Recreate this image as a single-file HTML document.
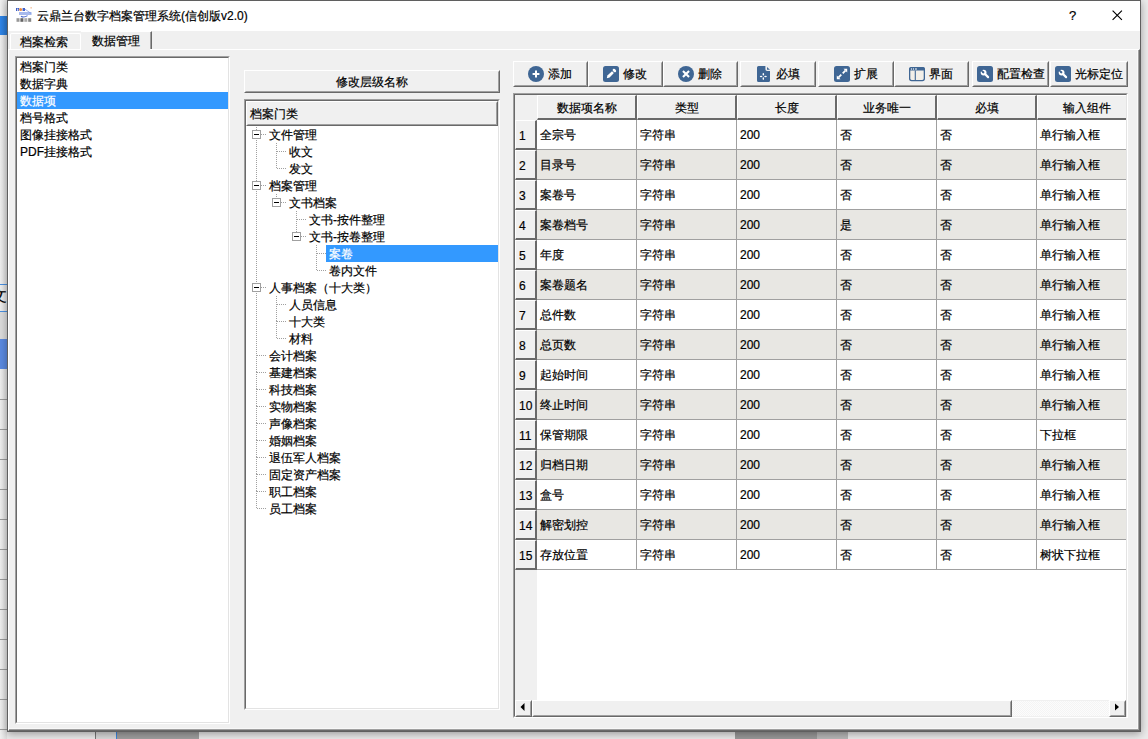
<!DOCTYPE html><html><head><meta charset="utf-8"><style>
*{box-sizing:border-box;margin:0;padding:0}
html,body{width:1148px;height:739px;overflow:hidden;background:#ebebeb;font-family:"Liberation Sans",sans-serif;font-size:12px;color:#000}
.abs{position:absolute}
.t{position:absolute;white-space:nowrap;line-height:17px;font-size:12px;-webkit-text-stroke:0.2px currentColor}
</style></head><body>

<div class="abs" style="left:0;top:0;width:7px;height:739px;background:linear-gradient(to right,#f0f0f0,#dcdcdc)"></div>
<div class="abs" style="left:0;top:16px;width:7px;height:19px;background:linear-gradient(to right,#2f86ea,#2a78d0)"></div>
<div class="abs" style="left:0;top:284px;width:7px;height:1px;background:#4a90e0"></div>
<div class="abs" style="left:0;top:311px;width:7px;height:1px;background:#4a90e0"></div>
<div class="abs" style="left:0;top:286px;width:7px;height:22px;overflow:hidden"><div class="t" style="left:-9px;top:1px;font-size:16px;line-height:18px">文</div></div>
<div class="abs" style="left:0;top:312px;width:7px;height:27px;background:#dcdcdc"></div>
<div class="abs" style="left:0;top:339px;width:7px;height:30px;background:#5b8ae0"></div>
<div class="abs" style="left:0;top:399px;width:7px;height:1px;background:#9a9a9a"></div>
<div class="abs" style="left:0;top:429px;width:7px;height:1px;background:#9a9a9a"></div>
<div class="abs" style="left:0;top:459px;width:7px;height:1px;background:#9a9a9a"></div>
<div class="abs" style="left:0;top:489px;width:7px;height:1px;background:#9a9a9a"></div>
<div class="abs" style="left:0;top:519px;width:7px;height:1px;background:#9a9a9a"></div>
<div class="abs" style="left:0;top:549px;width:7px;height:1px;background:#9a9a9a"></div>
<div class="abs" style="left:0;top:579px;width:7px;height:1px;background:#9a9a9a"></div>
<div class="abs" style="left:0;top:609px;width:7px;height:1px;background:#9a9a9a"></div>
<div class="abs" style="left:0;top:639px;width:7px;height:1px;background:#9a9a9a"></div>
<div class="abs" style="left:0;top:669px;width:7px;height:1px;background:#9a9a9a"></div>
<div class="abs" style="left:0;top:699px;width:7px;height:1px;background:#9a9a9a"></div>
<div class="abs" style="left:0;top:729px;width:7px;height:1px;background:#9a9a9a"></div>
<div class="abs" style="left:95px;top:731px;width:1px;height:8px;background:#777"></div>
<div class="abs" style="left:96px;top:731px;width:20px;height:8px;background:#dadada"></div>
<div class="abs" style="left:116px;top:731px;width:1px;height:8px;background:#3a86e0"></div>
<div class="abs" style="left:117px;top:731px;width:82px;height:8px;background:#a0a0a0"></div>
<div class="abs" style="left:735px;top:731px;width:82px;height:8px;background:#9a9a9a"></div>
<div class="abs" style="left:817px;top:731px;width:31px;height:8px;background:#b8b8b8"></div>
<div class="abs" style="left:7px;top:0;width:1134px;height:732px;background:#f0f0f0;border:1px solid #5f5f5f;box-shadow:0 2px 8px rgba(0,0,0,0.35)"></div>
<div class="abs" style="left:8px;top:1px;width:1132px;height:30px;background:#fff"></div>
<svg class="abs" style="left:16px;top:7px" width="16" height="16" viewBox="0 0 16 16">
<rect x="0" y="1" width="1.2" height="3" fill="#3c5cc4"/><rect x="1.4" y="1" width="1.8" height="0.9" fill="#3c5cc4"/><rect x="1.9" y="1" width="0.9" height="3" fill="#3c5cc4"/>
<circle cx="4.6" cy="2.5" r="1.5" fill="#f08a3c"/><rect x="6.6" y="1" width="2.4" height="3" fill="#4060c8"/>
<path d="M9 2.2 L15.2 6.5" stroke="#9fb2e8" stroke-width="1"/><rect x="14.6" y="0" width="1" height="1.6" fill="#f0b080"/>
<rect x="3" y="5" width="12.5" height="3" fill="#6d8ae0" opacity="0.6"/>
<path d="M5 9.2 Q8 11 11.5 8.6" stroke="#4a68cc" stroke-width="1.1" fill="none"/>
<rect x="0.5" y="11.2" width="3" height="3.6" fill="#444" opacity="0.55"/><rect x="4.4" y="11.2" width="3" height="3.6" fill="#222" opacity="0.7"/><rect x="8.3" y="11.2" width="3" height="3.6" fill="#555" opacity="0.5"/><rect x="12.2" y="11.2" width="3" height="3.6" fill="#333" opacity="0.6"/></svg>
<div class="t" style="left:37px;top:8px">云鼎兰台数字档案管理系统(信创版v2.0)</div>
<div class="t" style="left:1069px;top:7px;font-size:13px">?</div>
<svg class="abs" style="left:1112px;top:10px" width="11" height="11" viewBox="0 0 11 11"><path d="M0.6 0.6 L9.9 9.9 M9.9 0.6 L0.6 9.9" stroke="#000" stroke-width="1.15"/></svg>
<div class="abs" style="left:10px;top:33px;width:71px;height:17px;border-top:1px solid #fff;border-left:1px solid #fff;border-right:1px solid #fff;border-radius:2px 2px 0 0"></div>
<div class="t" style="left:20px;top:34px">档案检索</div>
<div class="abs" style="left:81px;top:31px;width:71px;height:19px;border-top:1px solid #fff;border-right:1px solid #696969"></div>
<div class="abs" style="left:150px;top:32px;width:1px;height:17px;background:#a0a0a0"></div>
<div class="t" style="left:92px;top:33px">数据管理</div>
<div class="abs" style="left:8px;top:49px;width:1132px;height:682px;border-top:1px solid #fff;border-left:1px solid #fff;border-right:1px solid #696969;border-bottom:1px solid #696969"></div>
<div class="abs" style="left:9px;top:50px;width:1130px;height:680px;border-right:1px solid #a0a0a0;border-bottom:1px solid #a0a0a0"></div>
<div class="abs" style="left:9px;top:50px;width:1129px;height:679px;border-right:1px solid #f8f8f8;border-bottom:1px solid #f8f8f8"></div>
<div class="abs" style="left:81px;top:49px;width:69px;height:1px;background:#f0f0f0"></div>
<div class="abs" style="left:15px;top:56px;width:215px;height:668px;border-top:1px solid #a0a0a0;border-left:1px solid #a0a0a0;border-right:1px solid #fff;border-bottom:1px solid #fff"></div>
<div class="abs" style="left:16px;top:57px;width:213px;height:666px;background:#fff;border-top:1px solid #696969;border-left:1px solid #696969;border-right:1px solid #e3e3e3;border-bottom:1px solid #e3e3e3"></div>
<div class="t" style="left:20px;top:59px">档案门类</div>
<div class="t" style="left:20px;top:76px">数据字典</div>
<div class="abs" style="left:17px;top:92px;width:211px;height:17px;background:#3399ff"></div>
<div class="t" style="left:20px;top:93px;color:#fff">数据项</div>
<div class="t" style="left:20px;top:110px">档号格式</div>
<div class="t" style="left:20px;top:127px">图像挂接格式</div>
<div class="t" style="left:20px;top:144px">PDF挂接格式</div>
<div class="abs" style="left:244px;top:70px;width:256px;height:23px;background:#f0f0f0;border-top:1px solid #fff;border-left:1px solid #fff;border-right:1px solid #696969;border-bottom:1px solid #696969"></div>
<div class="abs" style="left:245px;top:71px;width:254px;height:21px;border-top:1px solid #f0f0f0;border-left:1px solid #f0f0f0;border-right:1px solid #a0a0a0;border-bottom:1px solid #a0a0a0"></div>
<div class="t" style="left:244px;top:74px;width:256px;text-align:center">修改层级名称</div>
<div class="abs" style="left:244px;top:99px;width:256px;height:611px;border-top:1px solid #a0a0a0;border-left:1px solid #a0a0a0;border-right:1px solid #fff;border-bottom:1px solid #fff"></div>
<div class="abs" style="left:245px;top:100px;width:254px;height:609px;background:#fff;border-top:1px solid #696969;border-left:1px solid #696969;border-right:1px solid #e3e3e3;border-bottom:1px solid #e3e3e3"></div>
<div class="abs" style="left:246px;top:101px;width:252px;height:25px;background:#f0f0f0;border-top:1px solid #fff;border-left:1px solid #fff;border-right:1px solid #696969;border-bottom:1px solid #696969"></div>
<div class="abs" style="left:247px;top:102px;width:250px;height:23px;border-top:1px solid #f0f0f0;border-left:1px solid #f0f0f0;border-right:1px solid #a0a0a0;border-bottom:1px solid #a0a0a0"></div>
<div class="t" style="left:250px;top:106px">档案门类</div>
<svg class="abs" style="left:0;top:0" width="1148" height="739">
<line x1="257" y1="134.5" x2="266" y2="134.5" stroke="#a0a0a0" stroke-width="1" stroke-dasharray="1 1"/>
<line x1="256.5" y1="134" x2="256.5" y2="185" stroke="#a0a0a0" stroke-width="1" stroke-dasharray="1 1"/>
<line x1="256.5" y1="127" x2="256.5" y2="134" stroke="#a0a0a0" stroke-width="1" stroke-dasharray="1 1"/>
<rect x="252.5" y="130.5" width="8" height="8" fill="#fff" stroke="#a0a0a0" stroke-width="1"/>
<line x1="254" y1="134.5" x2="259" y2="134.5" stroke="#000" stroke-width="1"/>
<line x1="277" y1="151.5" x2="286" y2="151.5" stroke="#a0a0a0" stroke-width="1" stroke-dasharray="1 1"/>
<line x1="276.5" y1="151" x2="276.5" y2="168" stroke="#a0a0a0" stroke-width="1" stroke-dasharray="1 1"/>
<line x1="276.5" y1="143" x2="276.5" y2="151" stroke="#a0a0a0" stroke-width="1" stroke-dasharray="1 1"/>
<line x1="277" y1="168.5" x2="286" y2="168.5" stroke="#a0a0a0" stroke-width="1" stroke-dasharray="1 1"/>
<line x1="257" y1="185.5" x2="266" y2="185.5" stroke="#a0a0a0" stroke-width="1" stroke-dasharray="1 1"/>
<line x1="256.5" y1="185" x2="256.5" y2="287" stroke="#a0a0a0" stroke-width="1" stroke-dasharray="1 1"/>
<rect x="252.5" y="181.5" width="8" height="8" fill="#fff" stroke="#a0a0a0" stroke-width="1"/>
<line x1="254" y1="185.5" x2="259" y2="185.5" stroke="#000" stroke-width="1"/>
<line x1="277" y1="202.5" x2="286" y2="202.5" stroke="#a0a0a0" stroke-width="1" stroke-dasharray="1 1"/>
<line x1="276.5" y1="194" x2="276.5" y2="202" stroke="#a0a0a0" stroke-width="1" stroke-dasharray="1 1"/>
<rect x="272.5" y="198.5" width="8" height="8" fill="#fff" stroke="#a0a0a0" stroke-width="1"/>
<line x1="274" y1="202.5" x2="279" y2="202.5" stroke="#000" stroke-width="1"/>
<line x1="297" y1="219.5" x2="306" y2="219.5" stroke="#a0a0a0" stroke-width="1" stroke-dasharray="1 1"/>
<line x1="296.5" y1="219" x2="296.5" y2="236" stroke="#a0a0a0" stroke-width="1" stroke-dasharray="1 1"/>
<line x1="296.5" y1="211" x2="296.5" y2="219" stroke="#a0a0a0" stroke-width="1" stroke-dasharray="1 1"/>
<line x1="297" y1="236.5" x2="306" y2="236.5" stroke="#a0a0a0" stroke-width="1" stroke-dasharray="1 1"/>
<rect x="292.5" y="232.5" width="8" height="8" fill="#fff" stroke="#a0a0a0" stroke-width="1"/>
<line x1="294" y1="236.5" x2="299" y2="236.5" stroke="#000" stroke-width="1"/>
<line x1="317" y1="253.5" x2="326" y2="253.5" stroke="#a0a0a0" stroke-width="1" stroke-dasharray="1 1"/>
<line x1="316.5" y1="253" x2="316.5" y2="270" stroke="#a0a0a0" stroke-width="1" stroke-dasharray="1 1"/>
<line x1="316.5" y1="245" x2="316.5" y2="253" stroke="#a0a0a0" stroke-width="1" stroke-dasharray="1 1"/>
<line x1="317" y1="270.5" x2="326" y2="270.5" stroke="#a0a0a0" stroke-width="1" stroke-dasharray="1 1"/>
<line x1="257" y1="287.5" x2="266" y2="287.5" stroke="#a0a0a0" stroke-width="1" stroke-dasharray="1 1"/>
<line x1="256.5" y1="287" x2="256.5" y2="355" stroke="#a0a0a0" stroke-width="1" stroke-dasharray="1 1"/>
<rect x="252.5" y="283.5" width="8" height="8" fill="#fff" stroke="#a0a0a0" stroke-width="1"/>
<line x1="254" y1="287.5" x2="259" y2="287.5" stroke="#000" stroke-width="1"/>
<line x1="277" y1="304.5" x2="286" y2="304.5" stroke="#a0a0a0" stroke-width="1" stroke-dasharray="1 1"/>
<line x1="276.5" y1="304" x2="276.5" y2="321" stroke="#a0a0a0" stroke-width="1" stroke-dasharray="1 1"/>
<line x1="276.5" y1="296" x2="276.5" y2="304" stroke="#a0a0a0" stroke-width="1" stroke-dasharray="1 1"/>
<line x1="277" y1="321.5" x2="286" y2="321.5" stroke="#a0a0a0" stroke-width="1" stroke-dasharray="1 1"/>
<line x1="276.5" y1="321" x2="276.5" y2="338" stroke="#a0a0a0" stroke-width="1" stroke-dasharray="1 1"/>
<line x1="277" y1="338.5" x2="286" y2="338.5" stroke="#a0a0a0" stroke-width="1" stroke-dasharray="1 1"/>
<line x1="257" y1="355.5" x2="266" y2="355.5" stroke="#a0a0a0" stroke-width="1" stroke-dasharray="1 1"/>
<line x1="256.5" y1="355" x2="256.5" y2="372" stroke="#a0a0a0" stroke-width="1" stroke-dasharray="1 1"/>
<line x1="257" y1="372.5" x2="266" y2="372.5" stroke="#a0a0a0" stroke-width="1" stroke-dasharray="1 1"/>
<line x1="256.5" y1="372" x2="256.5" y2="389" stroke="#a0a0a0" stroke-width="1" stroke-dasharray="1 1"/>
<line x1="257" y1="389.5" x2="266" y2="389.5" stroke="#a0a0a0" stroke-width="1" stroke-dasharray="1 1"/>
<line x1="256.5" y1="389" x2="256.5" y2="406" stroke="#a0a0a0" stroke-width="1" stroke-dasharray="1 1"/>
<line x1="257" y1="406.5" x2="266" y2="406.5" stroke="#a0a0a0" stroke-width="1" stroke-dasharray="1 1"/>
<line x1="256.5" y1="406" x2="256.5" y2="423" stroke="#a0a0a0" stroke-width="1" stroke-dasharray="1 1"/>
<line x1="257" y1="423.5" x2="266" y2="423.5" stroke="#a0a0a0" stroke-width="1" stroke-dasharray="1 1"/>
<line x1="256.5" y1="423" x2="256.5" y2="440" stroke="#a0a0a0" stroke-width="1" stroke-dasharray="1 1"/>
<line x1="257" y1="440.5" x2="266" y2="440.5" stroke="#a0a0a0" stroke-width="1" stroke-dasharray="1 1"/>
<line x1="256.5" y1="440" x2="256.5" y2="457" stroke="#a0a0a0" stroke-width="1" stroke-dasharray="1 1"/>
<line x1="257" y1="457.5" x2="266" y2="457.5" stroke="#a0a0a0" stroke-width="1" stroke-dasharray="1 1"/>
<line x1="256.5" y1="457" x2="256.5" y2="474" stroke="#a0a0a0" stroke-width="1" stroke-dasharray="1 1"/>
<line x1="257" y1="474.5" x2="266" y2="474.5" stroke="#a0a0a0" stroke-width="1" stroke-dasharray="1 1"/>
<line x1="256.5" y1="474" x2="256.5" y2="491" stroke="#a0a0a0" stroke-width="1" stroke-dasharray="1 1"/>
<line x1="257" y1="491.5" x2="266" y2="491.5" stroke="#a0a0a0" stroke-width="1" stroke-dasharray="1 1"/>
<line x1="256.5" y1="491" x2="256.5" y2="508" stroke="#a0a0a0" stroke-width="1" stroke-dasharray="1 1"/>
<line x1="257" y1="508.5" x2="266" y2="508.5" stroke="#a0a0a0" stroke-width="1" stroke-dasharray="1 1"/>
</svg>
<div class="t" style="left:269px;top:127px">文件管理</div>
<div class="t" style="left:289px;top:144px">收文</div>
<div class="t" style="left:289px;top:161px">发文</div>
<div class="t" style="left:269px;top:178px">档案管理</div>
<div class="t" style="left:289px;top:195px">文书档案</div>
<div class="t" style="left:309px;top:212px">文书-按件整理</div>
<div class="t" style="left:309px;top:229px">文书-按卷整理</div>
<div class="abs" style="left:326px;top:245px;width:172px;height:17px;background:#3399ff"></div>
<div class="t" style="left:329px;top:246px;color:#fff">案卷</div>
<div class="t" style="left:329px;top:263px">卷内文件</div>
<div class="t" style="left:269px;top:280px">人事档案（十大类）</div>
<div class="t" style="left:289px;top:297px">人员信息</div>
<div class="t" style="left:289px;top:314px">十大类</div>
<div class="t" style="left:289px;top:331px">材料</div>
<div class="t" style="left:269px;top:348px">会计档案</div>
<div class="t" style="left:269px;top:365px">基建档案</div>
<div class="t" style="left:269px;top:382px">科技档案</div>
<div class="t" style="left:269px;top:399px">实物档案</div>
<div class="t" style="left:269px;top:416px">声像档案</div>
<div class="t" style="left:269px;top:433px">婚姻档案</div>
<div class="t" style="left:269px;top:450px">退伍军人档案</div>
<div class="t" style="left:269px;top:467px">固定资产档案</div>
<div class="t" style="left:269px;top:484px">职工档案</div>
<div class="t" style="left:269px;top:501px">员工档案</div>
<div class="abs" style="left:513px;top:61px;width:75px;height:26px;background:#f0f0f0;border-top:1px solid #fff;border-left:1px solid #fff;border-right:1px solid #696969;border-bottom:1px solid #696969"></div>
<div class="abs" style="left:514px;top:62px;width:73px;height:24px;border-top:1px solid #f0f0f0;border-left:1px solid #f0f0f0;border-right:1px solid #a0a0a0;border-bottom:1px solid #a0a0a0"></div>
<svg class="abs" style="left:528px;top:66px" width="16" height="16" viewBox="0 0 16 16"><circle cx="8" cy="8" r="8" fill="#3f6694"/><path d="M8 4.6 V11.4 M4.6 8 H11.4" stroke="#fff" stroke-width="2"/></svg>
<div class="t" style="left:548px;top:66px">添加</div>
<div class="abs" style="left:588px;top:61px;width:75px;height:26px;background:#f0f0f0;border-top:1px solid #fff;border-left:1px solid #fff;border-right:1px solid #696969;border-bottom:1px solid #696969"></div>
<div class="abs" style="left:589px;top:62px;width:73px;height:24px;border-top:1px solid #f0f0f0;border-left:1px solid #f0f0f0;border-right:1px solid #a0a0a0;border-bottom:1px solid #a0a0a0"></div>
<svg class="abs" style="left:603px;top:66px" width="16" height="16" viewBox="0 0 16 16"><rect x="0" y="0" width="16" height="16" rx="2.5" fill="#3f6694"/><path d="M3.8 12.2 L4.4 9.5 L9.0 5.2 L10.9 7.1 L6.6 11.6 Z" fill="#fff"/><path d="M10.9 4.0 L11.9 5.0" stroke="#fff" stroke-width="2.5" stroke-linecap="round"/></svg>
<div class="t" style="left:623px;top:66px">修改</div>
<div class="abs" style="left:663px;top:61px;width:75px;height:26px;background:#f0f0f0;border-top:1px solid #fff;border-left:1px solid #fff;border-right:1px solid #696969;border-bottom:1px solid #696969"></div>
<div class="abs" style="left:664px;top:62px;width:73px;height:24px;border-top:1px solid #f0f0f0;border-left:1px solid #f0f0f0;border-right:1px solid #a0a0a0;border-bottom:1px solid #a0a0a0"></div>
<svg class="abs" style="left:678px;top:66px" width="16" height="16" viewBox="0 0 16 16"><circle cx="8" cy="8" r="8" fill="#3f6694"/><path d="M5.7 5.7 L10.3 10.3 M10.3 5.7 L5.7 10.3" stroke="#fff" stroke-width="2.1" stroke-linecap="square"/></svg>
<div class="t" style="left:698px;top:66px">删除</div>
<div class="abs" style="left:740px;top:61px;width:76px;height:26px;background:#f0f0f0;border-top:1px solid #fff;border-left:1px solid #fff;border-right:1px solid #696969;border-bottom:1px solid #696969"></div>
<div class="abs" style="left:741px;top:62px;width:74px;height:24px;border-top:1px solid #f0f0f0;border-left:1px solid #f0f0f0;border-right:1px solid #a0a0a0;border-bottom:1px solid #a0a0a0"></div>
<svg class="abs" style="left:757px;top:66px" width="13" height="16" viewBox="0 0 13 16"><path d="M1.5 0 H8.4 V3.3 Q8.4 5 10.2 5 H13 V14.5 Q13 16 11.5 16 H1.5 Q0 16 0 14.5 V1.5 Q0 0 1.5 0 Z" fill="#3f6694"/><path d="M10 0.9 L13 3.7 H10 Z" fill="#3f6694"/><ellipse cx="6.3" cy="8.2" rx="0.75" ry="1.3" fill="#fff"/><ellipse cx="6.3" cy="12.6" rx="0.75" ry="1.3" fill="#fff"/><ellipse cx="4.1" cy="10.4" rx="1.3" ry="0.75" fill="#fff"/><ellipse cx="8.5" cy="10.4" rx="1.3" ry="0.75" fill="#fff"/></svg>
<div class="t" style="left:776px;top:66px">必填</div>
<div class="abs" style="left:818px;top:61px;width:76px;height:26px;background:#f0f0f0;border-top:1px solid #fff;border-left:1px solid #fff;border-right:1px solid #696969;border-bottom:1px solid #696969"></div>
<div class="abs" style="left:819px;top:62px;width:74px;height:24px;border-top:1px solid #f0f0f0;border-left:1px solid #f0f0f0;border-right:1px solid #a0a0a0;border-bottom:1px solid #a0a0a0"></div>
<svg class="abs" style="left:834px;top:66px" width="16" height="16" viewBox="0 0 16 16"><rect x="0" y="0" width="16" height="16" rx="2.5" fill="#3f6694"/><path d="M4.6 11.4 L7.3 8.7 M8.7 7.3 L11.4 4.6" stroke="#fff" stroke-width="1.8"/><path d="M9.5 2.8 H13.2 V6.5 Z M2.8 9.5 V13.2 H6.5 Z" fill="#fff"/></svg>
<div class="t" style="left:854px;top:66px">扩展</div>
<div class="abs" style="left:894px;top:61px;width:75px;height:26px;background:#f0f0f0;border-top:1px solid #fff;border-left:1px solid #fff;border-right:1px solid #696969;border-bottom:1px solid #696969"></div>
<div class="abs" style="left:895px;top:62px;width:73px;height:24px;border-top:1px solid #f0f0f0;border-left:1px solid #f0f0f0;border-right:1px solid #a0a0a0;border-bottom:1px solid #a0a0a0"></div>
<svg class="abs" style="left:909px;top:66px" width="16" height="16" viewBox="0 0 16 16"><rect x="0.65" y="1.65" width="14.7" height="12.9" rx="2" fill="#f2efe9" stroke="#3f6694" stroke-width="1.3"/><path d="M0 4.6 V3.2 Q0 1 2.2 1 H13.8 Q16 1 16 3.2 V4.6 Z" fill="#3f6694"/><rect x="1.9" y="2.3" width="1.1" height="1.4" fill="#dde4ec"/><rect x="3.9" y="2.3" width="1.1" height="1.4" fill="#dde4ec"/><rect x="6" y="2.3" width="1.9" height="1.4" fill="#c9d4e0"/><path d="M6.3 4.5 V14.5" stroke="#3f6694" stroke-width="1.1"/></svg>
<div class="t" style="left:929px;top:66px">界面</div>
<div class="abs" style="left:972px;top:61px;width:77px;height:26px;background:#f0f0f0;border-top:1px solid #fff;border-left:1px solid #fff;border-right:1px solid #696969;border-bottom:1px solid #696969"></div>
<div class="abs" style="left:973px;top:62px;width:75px;height:24px;border-top:1px solid #f0f0f0;border-left:1px solid #f0f0f0;border-right:1px solid #a0a0a0;border-bottom:1px solid #a0a0a0"></div>
<svg class="abs" style="left:977px;top:66px" width="16" height="16" viewBox="0 0 16 16"><rect x="0" y="0" width="16" height="16" rx="2.5" fill="#3f6694"/><circle cx="6.6" cy="6.6" r="2.9" fill="#fff"/><circle cx="6.3" cy="6.3" r="1.1" fill="#3f6694"/><path d="M6.3 6.3 L3.4 3.4" stroke="#3f6694" stroke-width="1.7"/><path d="M8 8 L11.1 11.1" stroke="#fff" stroke-width="2.2" stroke-linecap="round"/></svg>
<div class="t" style="left:997px;top:66px">配置检查</div>
<div class="abs" style="left:1050px;top:61px;width:78px;height:26px;background:#f0f0f0;border-top:1px solid #fff;border-left:1px solid #fff;border-right:1px solid #696969;border-bottom:1px solid #696969"></div>
<div class="abs" style="left:1051px;top:62px;width:76px;height:24px;border-top:1px solid #f0f0f0;border-left:1px solid #f0f0f0;border-right:1px solid #a0a0a0;border-bottom:1px solid #a0a0a0"></div>
<svg class="abs" style="left:1055px;top:66px" width="16" height="16" viewBox="0 0 16 16"><rect x="0" y="0" width="16" height="16" rx="2.5" fill="#3f6694"/><circle cx="6.6" cy="6.6" r="2.9" fill="#fff"/><circle cx="6.3" cy="6.3" r="1.1" fill="#3f6694"/><path d="M6.3 6.3 L3.4 3.4" stroke="#3f6694" stroke-width="1.7"/><path d="M8 8 L11.1 11.1" stroke="#fff" stroke-width="2.2" stroke-linecap="round"/></svg>
<div class="t" style="left:1075px;top:66px">光标定位</div>
<div class="abs" style="left:513px;top:93px;width:615px;height:625px;border-top:1px solid #a0a0a0;border-left:1px solid #a0a0a0;border-right:1px solid #fff;border-bottom:1px solid #fff"></div>
<div class="abs" style="left:514px;top:94px;width:613px;height:623px;background:#fff;border-top:1px solid #696969;border-left:1px solid #696969;border-right:1px solid #e3e3e3;border-bottom:1px solid #e3e3e3"></div>
<div class="abs" style="left:515px;top:95px;width:22px;height:25px;background:#f0f0f0"></div>
<div class="abs" style="left:537px;top:95px;width:100px;height:25px;background:#f0f0f0;border-top:1px solid #fff;border-left:1px solid #fff;border-right:2px solid #696969;border-bottom:2px solid #696969"></div>
<div class="t" style="left:537px;top:100px;width:100px;text-align:center">数据项名称</div>
<div class="abs" style="left:637px;top:95px;width:100px;height:25px;background:#f0f0f0;border-top:1px solid #fff;border-left:1px solid #fff;border-right:2px solid #696969;border-bottom:2px solid #696969"></div>
<div class="t" style="left:637px;top:100px;width:100px;text-align:center">类型</div>
<div class="abs" style="left:737px;top:95px;width:100px;height:25px;background:#f0f0f0;border-top:1px solid #fff;border-left:1px solid #fff;border-right:2px solid #696969;border-bottom:2px solid #696969"></div>
<div class="t" style="left:737px;top:100px;width:100px;text-align:center">长度</div>
<div class="abs" style="left:837px;top:95px;width:100px;height:25px;background:#f0f0f0;border-top:1px solid #fff;border-left:1px solid #fff;border-right:2px solid #696969;border-bottom:2px solid #696969"></div>
<div class="t" style="left:837px;top:100px;width:100px;text-align:center">业务唯一</div>
<div class="abs" style="left:937px;top:95px;width:100px;height:25px;background:#f0f0f0;border-top:1px solid #fff;border-left:1px solid #fff;border-right:2px solid #696969;border-bottom:2px solid #696969"></div>
<div class="t" style="left:937px;top:100px;width:100px;text-align:center">必填</div>
<div class="abs" style="left:1037px;top:95px;width:89px;height:25px;background:#f0f0f0;border-top:1px solid #fff;border-left:1px solid #fff;border-right:0;border-bottom:2px solid #696969"></div>
<div class="t" style="left:1037px;top:100px;width:100px;text-align:center">输入组件</div>
<div class="abs" style="left:537px;top:120px;width:589px;height:580px;background:#fff"></div>
<div class="abs" style="left:515px;top:120px;width:22px;height:580px;background:#f0f0f0"></div>
<div class="abs" style="left:537px;top:149px;width:589px;height:1px;background:#a0a0a0"></div>
<div class="abs" style="left:515px;top:120px;width:22px;height:30px;background:#f0f0f0;border-top:1px solid #fff;border-left:1px solid #fff;border-right:2px solid #696969;border-bottom:2px solid #696969"></div>
<div class="t" style="left:519px;top:128px">1</div>
<div class="t" style="left:540px;top:127px">全宗号</div>
<div class="t" style="left:640px;top:127px">字符串</div>
<div class="t" style="left:740px;top:127px">200</div>
<div class="t" style="left:840px;top:127px">否</div>
<div class="t" style="left:940px;top:127px">否</div>
<div class="t" style="left:1040px;top:127px">单行输入框</div>
<div class="abs" style="left:537px;top:150px;width:589px;height:29px;background:#e8e7e3"></div>
<div class="abs" style="left:537px;top:179px;width:589px;height:1px;background:#a0a0a0"></div>
<div class="abs" style="left:515px;top:150px;width:22px;height:30px;background:#f0f0f0;border-top:1px solid #fff;border-left:1px solid #fff;border-right:2px solid #696969;border-bottom:2px solid #696969"></div>
<div class="t" style="left:519px;top:158px">2</div>
<div class="t" style="left:540px;top:157px">目录号</div>
<div class="t" style="left:640px;top:157px">字符串</div>
<div class="t" style="left:740px;top:157px">200</div>
<div class="t" style="left:840px;top:157px">否</div>
<div class="t" style="left:940px;top:157px">否</div>
<div class="t" style="left:1040px;top:157px">单行输入框</div>
<div class="abs" style="left:537px;top:209px;width:589px;height:1px;background:#a0a0a0"></div>
<div class="abs" style="left:515px;top:180px;width:22px;height:30px;background:#f0f0f0;border-top:1px solid #fff;border-left:1px solid #fff;border-right:2px solid #696969;border-bottom:2px solid #696969"></div>
<div class="t" style="left:519px;top:188px">3</div>
<div class="t" style="left:540px;top:187px">案卷号</div>
<div class="t" style="left:640px;top:187px">字符串</div>
<div class="t" style="left:740px;top:187px">200</div>
<div class="t" style="left:840px;top:187px">否</div>
<div class="t" style="left:940px;top:187px">否</div>
<div class="t" style="left:1040px;top:187px">单行输入框</div>
<div class="abs" style="left:537px;top:210px;width:589px;height:29px;background:#e8e7e3"></div>
<div class="abs" style="left:537px;top:239px;width:589px;height:1px;background:#a0a0a0"></div>
<div class="abs" style="left:515px;top:210px;width:22px;height:30px;background:#f0f0f0;border-top:1px solid #fff;border-left:1px solid #fff;border-right:2px solid #696969;border-bottom:2px solid #696969"></div>
<div class="t" style="left:519px;top:218px">4</div>
<div class="t" style="left:540px;top:217px">案卷档号</div>
<div class="t" style="left:640px;top:217px">字符串</div>
<div class="t" style="left:740px;top:217px">200</div>
<div class="t" style="left:840px;top:217px">是</div>
<div class="t" style="left:940px;top:217px">否</div>
<div class="t" style="left:1040px;top:217px">单行输入框</div>
<div class="abs" style="left:537px;top:269px;width:589px;height:1px;background:#a0a0a0"></div>
<div class="abs" style="left:515px;top:240px;width:22px;height:30px;background:#f0f0f0;border-top:1px solid #fff;border-left:1px solid #fff;border-right:2px solid #696969;border-bottom:2px solid #696969"></div>
<div class="t" style="left:519px;top:248px">5</div>
<div class="t" style="left:540px;top:247px">年度</div>
<div class="t" style="left:640px;top:247px">字符串</div>
<div class="t" style="left:740px;top:247px">200</div>
<div class="t" style="left:840px;top:247px">否</div>
<div class="t" style="left:940px;top:247px">否</div>
<div class="t" style="left:1040px;top:247px">单行输入框</div>
<div class="abs" style="left:537px;top:270px;width:589px;height:29px;background:#e8e7e3"></div>
<div class="abs" style="left:537px;top:299px;width:589px;height:1px;background:#a0a0a0"></div>
<div class="abs" style="left:515px;top:270px;width:22px;height:30px;background:#f0f0f0;border-top:1px solid #fff;border-left:1px solid #fff;border-right:2px solid #696969;border-bottom:2px solid #696969"></div>
<div class="t" style="left:519px;top:278px">6</div>
<div class="t" style="left:540px;top:277px">案卷题名</div>
<div class="t" style="left:640px;top:277px">字符串</div>
<div class="t" style="left:740px;top:277px">200</div>
<div class="t" style="left:840px;top:277px">否</div>
<div class="t" style="left:940px;top:277px">否</div>
<div class="t" style="left:1040px;top:277px">单行输入框</div>
<div class="abs" style="left:537px;top:329px;width:589px;height:1px;background:#a0a0a0"></div>
<div class="abs" style="left:515px;top:300px;width:22px;height:30px;background:#f0f0f0;border-top:1px solid #fff;border-left:1px solid #fff;border-right:2px solid #696969;border-bottom:2px solid #696969"></div>
<div class="t" style="left:519px;top:308px">7</div>
<div class="t" style="left:540px;top:307px">总件数</div>
<div class="t" style="left:640px;top:307px">字符串</div>
<div class="t" style="left:740px;top:307px">200</div>
<div class="t" style="left:840px;top:307px">否</div>
<div class="t" style="left:940px;top:307px">否</div>
<div class="t" style="left:1040px;top:307px">单行输入框</div>
<div class="abs" style="left:537px;top:330px;width:589px;height:29px;background:#e8e7e3"></div>
<div class="abs" style="left:537px;top:359px;width:589px;height:1px;background:#a0a0a0"></div>
<div class="abs" style="left:515px;top:330px;width:22px;height:30px;background:#f0f0f0;border-top:1px solid #fff;border-left:1px solid #fff;border-right:2px solid #696969;border-bottom:2px solid #696969"></div>
<div class="t" style="left:519px;top:338px">8</div>
<div class="t" style="left:540px;top:337px">总页数</div>
<div class="t" style="left:640px;top:337px">字符串</div>
<div class="t" style="left:740px;top:337px">200</div>
<div class="t" style="left:840px;top:337px">否</div>
<div class="t" style="left:940px;top:337px">否</div>
<div class="t" style="left:1040px;top:337px">单行输入框</div>
<div class="abs" style="left:537px;top:389px;width:589px;height:1px;background:#a0a0a0"></div>
<div class="abs" style="left:515px;top:360px;width:22px;height:30px;background:#f0f0f0;border-top:1px solid #fff;border-left:1px solid #fff;border-right:2px solid #696969;border-bottom:2px solid #696969"></div>
<div class="t" style="left:519px;top:368px">9</div>
<div class="t" style="left:540px;top:367px">起始时间</div>
<div class="t" style="left:640px;top:367px">字符串</div>
<div class="t" style="left:740px;top:367px">200</div>
<div class="t" style="left:840px;top:367px">否</div>
<div class="t" style="left:940px;top:367px">否</div>
<div class="t" style="left:1040px;top:367px">单行输入框</div>
<div class="abs" style="left:537px;top:390px;width:589px;height:29px;background:#e8e7e3"></div>
<div class="abs" style="left:537px;top:419px;width:589px;height:1px;background:#a0a0a0"></div>
<div class="abs" style="left:515px;top:390px;width:22px;height:30px;background:#f0f0f0;border-top:1px solid #fff;border-left:1px solid #fff;border-right:2px solid #696969;border-bottom:2px solid #696969"></div>
<div class="t" style="left:519px;top:398px">10</div>
<div class="t" style="left:540px;top:397px">终止时间</div>
<div class="t" style="left:640px;top:397px">字符串</div>
<div class="t" style="left:740px;top:397px">200</div>
<div class="t" style="left:840px;top:397px">否</div>
<div class="t" style="left:940px;top:397px">否</div>
<div class="t" style="left:1040px;top:397px">单行输入框</div>
<div class="abs" style="left:537px;top:449px;width:589px;height:1px;background:#a0a0a0"></div>
<div class="abs" style="left:515px;top:420px;width:22px;height:30px;background:#f0f0f0;border-top:1px solid #fff;border-left:1px solid #fff;border-right:2px solid #696969;border-bottom:2px solid #696969"></div>
<div class="t" style="left:519px;top:428px">11</div>
<div class="t" style="left:540px;top:427px">保管期限</div>
<div class="t" style="left:640px;top:427px">字符串</div>
<div class="t" style="left:740px;top:427px">200</div>
<div class="t" style="left:840px;top:427px">否</div>
<div class="t" style="left:940px;top:427px">否</div>
<div class="t" style="left:1040px;top:427px">下拉框</div>
<div class="abs" style="left:537px;top:450px;width:589px;height:29px;background:#e8e7e3"></div>
<div class="abs" style="left:537px;top:479px;width:589px;height:1px;background:#a0a0a0"></div>
<div class="abs" style="left:515px;top:450px;width:22px;height:30px;background:#f0f0f0;border-top:1px solid #fff;border-left:1px solid #fff;border-right:2px solid #696969;border-bottom:2px solid #696969"></div>
<div class="t" style="left:519px;top:458px">12</div>
<div class="t" style="left:540px;top:457px">归档日期</div>
<div class="t" style="left:640px;top:457px">字符串</div>
<div class="t" style="left:740px;top:457px">200</div>
<div class="t" style="left:840px;top:457px">否</div>
<div class="t" style="left:940px;top:457px">否</div>
<div class="t" style="left:1040px;top:457px">单行输入框</div>
<div class="abs" style="left:537px;top:509px;width:589px;height:1px;background:#a0a0a0"></div>
<div class="abs" style="left:515px;top:480px;width:22px;height:30px;background:#f0f0f0;border-top:1px solid #fff;border-left:1px solid #fff;border-right:2px solid #696969;border-bottom:2px solid #696969"></div>
<div class="t" style="left:519px;top:488px">13</div>
<div class="t" style="left:540px;top:487px">盒号</div>
<div class="t" style="left:640px;top:487px">字符串</div>
<div class="t" style="left:740px;top:487px">200</div>
<div class="t" style="left:840px;top:487px">否</div>
<div class="t" style="left:940px;top:487px">否</div>
<div class="t" style="left:1040px;top:487px">单行输入框</div>
<div class="abs" style="left:537px;top:510px;width:589px;height:29px;background:#e8e7e3"></div>
<div class="abs" style="left:537px;top:539px;width:589px;height:1px;background:#a0a0a0"></div>
<div class="abs" style="left:515px;top:510px;width:22px;height:30px;background:#f0f0f0;border-top:1px solid #fff;border-left:1px solid #fff;border-right:2px solid #696969;border-bottom:2px solid #696969"></div>
<div class="t" style="left:519px;top:518px">14</div>
<div class="t" style="left:540px;top:517px">解密划控</div>
<div class="t" style="left:640px;top:517px">字符串</div>
<div class="t" style="left:740px;top:517px">200</div>
<div class="t" style="left:840px;top:517px">否</div>
<div class="t" style="left:940px;top:517px">否</div>
<div class="t" style="left:1040px;top:517px">单行输入框</div>
<div class="abs" style="left:537px;top:569px;width:589px;height:1px;background:#a0a0a0"></div>
<div class="abs" style="left:515px;top:540px;width:22px;height:30px;background:#f0f0f0;border-top:1px solid #fff;border-left:1px solid #fff;border-right:2px solid #696969;border-bottom:2px solid #696969"></div>
<div class="t" style="left:519px;top:548px">15</div>
<div class="t" style="left:540px;top:547px">存放位置</div>
<div class="t" style="left:640px;top:547px">字符串</div>
<div class="t" style="left:740px;top:547px">200</div>
<div class="t" style="left:840px;top:547px">否</div>
<div class="t" style="left:940px;top:547px">否</div>
<div class="t" style="left:1040px;top:547px">树状下拉框</div>
<div class="abs" style="left:636px;top:120px;width:1px;height:450px;background:#a0a0a0"></div>
<div class="abs" style="left:736px;top:120px;width:1px;height:450px;background:#a0a0a0"></div>
<div class="abs" style="left:836px;top:120px;width:1px;height:450px;background:#a0a0a0"></div>
<div class="abs" style="left:936px;top:120px;width:1px;height:450px;background:#a0a0a0"></div>
<div class="abs" style="left:1036px;top:120px;width:1px;height:450px;background:#a0a0a0"></div>
<div class="abs" style="left:515px;top:700px;width:611px;height:17px;background:#f0f0f0"></div>
<div class="abs" style="left:1012px;top:701px;width:97px;height:15px;background:repeating-conic-gradient(#f4f4f4 0 25%, #fcfcfc 0 50%) 0 0/2px 2px"></div>
<div class="abs" style="left:515px;top:700px;width:17px;height:17px;background:#f0f0f0;border-top:1px solid #fff;border-left:1px solid #fff;border-right:1px solid #696969;border-bottom:1px solid #696969"></div>
<div class="abs" style="left:516px;top:701px;width:15px;height:15px;border-top:1px solid #f0f0f0;border-left:1px solid #f0f0f0;border-right:1px solid #a0a0a0;border-bottom:1px solid #a0a0a0"></div>
<div class="abs" style="left:532px;top:700px;width:480px;height:17px;background:#f0f0f0;border-top:1px solid #fff;border-left:1px solid #fff;border-right:1px solid #696969;border-bottom:1px solid #696969"></div>
<div class="abs" style="left:533px;top:701px;width:478px;height:15px;border-top:1px solid #f0f0f0;border-left:1px solid #f0f0f0;border-right:1px solid #a0a0a0;border-bottom:1px solid #a0a0a0"></div>
<div class="abs" style="left:1109px;top:700px;width:17px;height:17px;background:#f0f0f0;border-top:1px solid #fff;border-left:1px solid #fff;border-right:1px solid #696969;border-bottom:1px solid #696969"></div>
<div class="abs" style="left:1110px;top:701px;width:15px;height:15px;border-top:1px solid #f0f0f0;border-left:1px solid #f0f0f0;border-right:1px solid #a0a0a0;border-bottom:1px solid #a0a0a0"></div>
<svg class="abs" style="left:520px;top:703px" width="6" height="8"><path d="M0.5 4 L4.5 0 V8 Z" fill="#000"/></svg>
<svg class="abs" style="left:1114px;top:703px" width="6" height="8"><path d="M5 4 L1 0.5 V7.5 Z" fill="#000"/></svg>
</body></html>
